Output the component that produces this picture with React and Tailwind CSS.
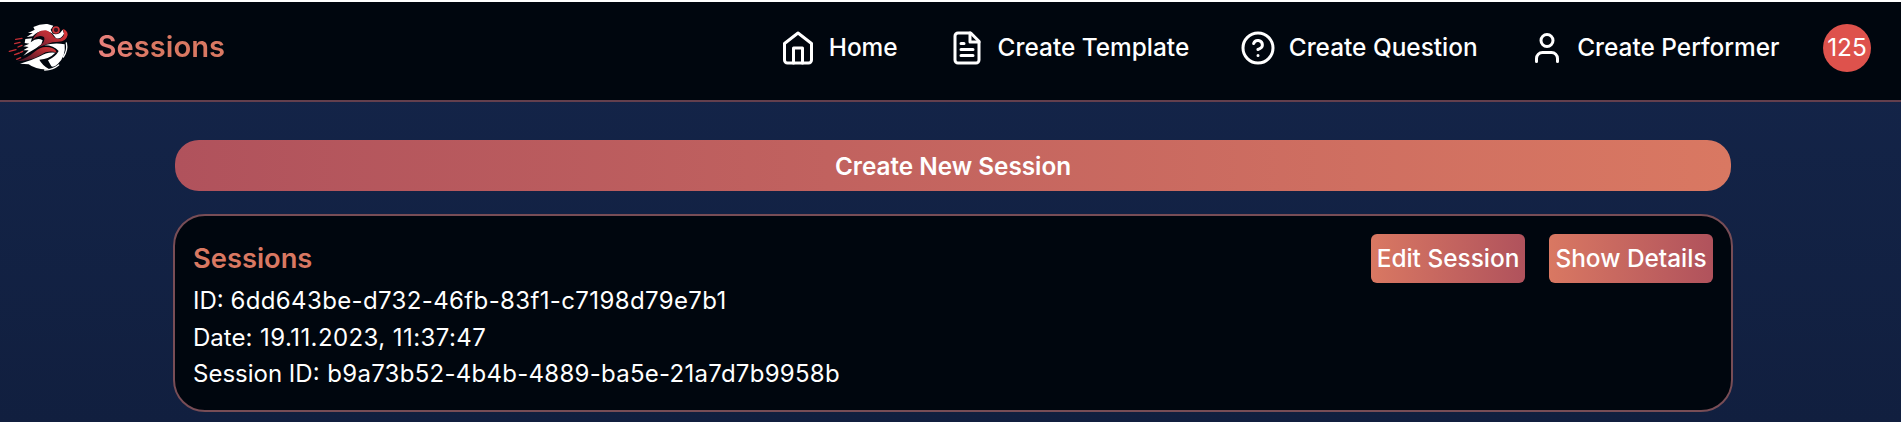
import React from "react";

const Icon = ({ children }) => (
  <svg viewBox="0 0 24 24" className="size-9 shrink-0" fill="none" stroke="currentColor" strokeWidth="2" strokeLinecap="round" strokeLinejoin="round">
    {children}
  </svg>
);

const Logo = () => (
  <svg viewBox="0 0 240 195" className="h-[65px] w-20 shrink-0">
    <defs>
      <linearGradient id="arm" x1="0" y1="1" x2="1" y2="0">
        <stop offset="0" stopColor="#5a1830" />
        <stop offset=".5" stopColor="#b52d35" />
        <stop offset="1" stopColor="#e0393a" />
      </linearGradient>
      <linearGradient id="leg" x1="0" y1="1" x2="1" y2="0">
        <stop offset="0" stopColor="#3a1024" />
        <stop offset="1" stopColor="#e0393a" />
      </linearGradient>
    </defs>
    <path d="M100 36 Q120 26 142 27 L160 32 L152 44 L158 56 L150 52 Q120 40 98 64 L80 66 L98 54 L84 54 L104 44Z" fill="#fff" />
    <path d="M76 72 L96 70 L92 82 Q112 66 128 76 L124 88 L108 100 L70 122 L86 106 L70 106 L86 96 L70 94 L88 86 L74 84Z" fill="#fff" />
    <path d="M156 54 Q166 62 180 54 L188 44 L192 56 Q182 74 168 70Z" fill="#fff" />
    <path d="M132 91 Q164 82 194 88 Q198 124 174 146 Q162 158 154 154 L144 136 Q168 124 176 108 Q160 90 132 91Z" fill="#fff" />
    <path d="M98 74 Q112 44 138 46 Q152 50 162 66 Q176 78 188 66 Q196 58 188 42 Q203 46 203 60 Q198 80 176 80 Q156 80 142 87 L112 98 Q140 80 132 66 Q114 58 98 74Z" fill="url(#arm)" />
    <path d="M50 139 Q84 128 104 110 Q124 92 148 97 Q166 100 170 113 Q144 104 122 120 Q92 138 50 139Z" fill="url(#leg)" />
    <path d="M60 146 Q92 138 120 124 Q140 110 166 113 Q148 132 118 134 Q126 150 148 163 Q110 166 86 148Z" fill="#fff" />
    <circle cx="168" cy="45" r="9" fill="#3a1420" stroke="#d0383c" strokeWidth="5" />
    <path d="M199 84 Q204 106 190 126M176 150 Q160 164 134 165" fill="none" stroke="#fff" strokeWidth="4" strokeLinecap="round" />
    <path d="M47 73 L66 70M44 86 L60 82M28 109 L48 104M44 119 L58 114M54 96 L66 91M62 112 L68 109M50 133 L62 128" stroke="#c52f36" strokeWidth="4" strokeLinecap="round" />
  </svg>
);

const links = [
  {
    label: "Home",
    gap: "mr-[51.5px]",
    icon: <><path d="m3 9 9-7 9 7v11a2 2 0 0 1-2 2H5a2 2 0 0 1-2-2z" /><polyline points="9 22 9 12 15 12 15 22" /></>,
  },
  {
    label: "Create Template",
    gap: "mr-[51px]",
    icon: <><path d="M14.5 2H6a2 2 0 0 0-2 2v16a2 2 0 0 0 2 2h12a2 2 0 0 0 2-2V7.5L14.5 2z" /><polyline points="14 2 14 8 20 8" /><path d="M16 13H8M16 17H8M10 9H8" /></>,
  },
  {
    label: "Create Question",
    gap: "mr-[51px]",
    icon: <><circle cx="12" cy="12" r="10" /><path d="M9.09 9a3 3 0 0 1 5.83 1c0 2-3 3-3 3M12 17h.01" /></>,
  },
  {
    label: "Create Performer",
    gap: "mr-[43.5px]",
    icon: <><path d="M19 21v-2a4 4 0 0 0-4-4H9a4 4 0 0 0-4 4v2" /><circle cx="12" cy="7" r="4" /></>,
  },
];

export default function App() {
  return (
    <div className="h-[422px] overflow-hidden border-t-2 border-r-3 border-white bg-linear-to-b from-[#14254a] to-[#111f3f] font-['Inter',sans-serif] text-2xl text-white">
      <header className="flex h-[100px] items-center border-b-2 border-[#633f4d] bg-[#00060e] pb-[7px]">
        <Logo />
        <h1 className="ml-[17.5px] bg-linear-to-r from-[#e8817d] to-[#d97862] to-40% bg-clip-text text-[29.2px] font-semibold text-transparent">Sessions</h1>
        <nav className="ml-auto flex items-center text-[24.4px]">
          {links.map((l) => (
            <a key={l.label} className={`flex items-center gap-[12.5px] font-medium ${l.gap}`}>
              <Icon>{l.icon}</Icon>
              {l.label}
            </a>
          ))}
        </nav>
        <div className="mr-[30px] flex size-12 items-center justify-center rounded-full bg-[#de524c] text-[24.4px]">125</div>
      </header>
      <main className="ml-[173px] flex w-[1560px] flex-col pt-[38px]">
        <button className="mx-[2px] h-[51px] rounded-3xl bg-linear-to-r from-[#b0525c] to-[#d97862] pt-px text-[24.3px] font-semibold">Create New Session</button>
        <section className="mt-[23px] flex h-[198px] justify-between rounded-[32px] border-2 border-[#784d56] bg-[#00060e] px-[18px] pt-[18px]">
          <div className="flex flex-col pt-[6px]">
            <h2 className="mb-[5px] text-[27.3px] leading-[38px] font-semibold text-[#d97862]">Sessions</h2>
            <p className="leading-[36.5px]">ID: <span className="tracking-[0.37px]">6dd643be-d732-46fb-83f1-c7198d79e7b1</span></p>
            <p className="leading-[36.5px]">Date: <span className="ml-px tracking-[0.42px]">19.11.2023, 11:37:47</span></p>
            <p className="leading-[36.5px]">Session ID: <span className="ml-px tracking-[0.27px]">b9a73b52-4b4b-4889-ba5e-21a7d7b9958b</span></p>
          </div>
          <div className="flex gap-6 text-[24.4px] font-medium">
            <button className="h-[49px] w-[154px] rounded-md bg-linear-to-r from-[#d97862] to-[#b0525c] whitespace-nowrap">Edit Session</button>
            <button className="h-[49px] w-[164px] rounded-md bg-linear-to-r from-[#d97862] to-[#b0525c] whitespace-nowrap">Show Details</button>
          </div>
        </section>
      </main>
    </div>
  );
}
